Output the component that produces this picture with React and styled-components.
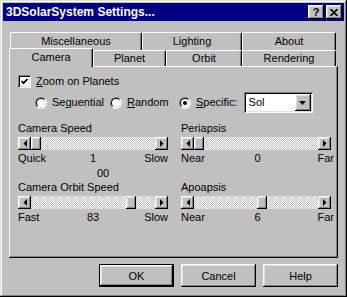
import React from 'react';
import styled, { createGlobalStyle, css } from 'styled-components';

const GlobalStyle = createGlobalStyle`
  html, body {
    margin: 0;
    padding: 0;
    background: #c0c0c0;
  }
  body {
    font-family: "Liberation Sans", Arial, sans-serif;
    font-size: 11px;
    color: #000;
  }
`;

const raised = css`
  box-shadow: inset -1px -1px #000, inset 1px 1px #fff, inset -2px -2px #808080, inset 2px 2px #dfdfdf;
`;

const sunken = css`
  box-shadow: inset 1px 1px #808080, inset -1px -1px #fff, inset 2px 2px #000, inset -2px -2px #dfdfdf;
`;

const Window = styled.div`
  width: 347px;
  height: 297px;
  box-sizing: border-box;
  padding: 3px;
  background: #c0c0c0;
  box-shadow: inset -1px -1px #000, inset 1px 1px #dfdfdf, inset -2px -2px #808080, inset 2px 2px #fff;
  display: flex;
  flex-direction: column;
`;

const TitleBar = styled.div`
  height: 18px;
  flex-shrink: 0;
  background: #000080;
  color: #fff;
  display: flex;
  align-items: center;
  justify-content: space-between;
  padding: 0 2px 0 3px;
  font-weight: bold;
  font-size: 12px;
`;

const TitleButtons = styled.div`
  display: flex;
  gap: 2px;
`;

const TitleButton = styled.div`
  width: 16px;
  height: 14px;
  box-sizing: border-box;
  background: #c0c0c0;
  ${raised};
  color: #000;
  font-size: 11px;
  font-weight: bold;
  display: flex;
  align-items: center;
  justify-content: center;
  line-height: 1;
`;

const Body = styled.div`
  flex: 1;
  padding: 11px 6px 0;
  display: flex;
  flex-direction: column;
`;

const TabRow = styled.div`
  display: flex;
  margin-left: ${p => p.$indent || 0}px;
`;

const Tab = styled.div`
  width: ${p => p.$w}px;
  height: ${p => p.$h}px;
  box-sizing: border-box;
  background: #c0c0c0;
  border: 1px solid #fff;
  border-bottom: none;
  border-right-color: #000;
  border-radius: 2px 2px 0 0;
  box-shadow: inset -1px 0 #808080;
  display: flex;
  justify-content: center;
  padding-top: ${p => p.$pt}px;
  line-height: 13px;
  ${p => p.$selected && css`
    position: relative;
    z-index: 1;
    margin-top: -2px;
    margin-bottom: -1px;
  `}
`;

const Panel = styled.div`
  height: 192px;
  box-sizing: border-box;
  padding: 9px 9px 0;
  box-shadow: inset -1px -1px #000, inset 1px 1px #fff, inset -2px -2px #808080;
  display: flex;
  flex-direction: column;
`;

const CheckRow = styled.label`
  display: flex;
  align-items: center;
  gap: 5px;
  height: 13px;
  line-height: 13px;
`;

const CheckBox = styled.span`
  width: 13px;
  height: 13px;
  box-sizing: border-box;
  background: #fff;
  ${sunken};
  display: flex;
  align-items: center;
  justify-content: center;
`;

const RadioRow = styled.div`
  display: flex;
  align-items: center;
  height: 21px;
  margin-top: 4px;
  padding-left: 17px;
`;

const RadioOption = styled.label`
  display: flex;
  align-items: center;
  gap: 5px;
  width: ${p => (p.$w ? `${p.$w}px` : 'auto')};
  line-height: 13px;
`;

const RadioOuter = styled.span`
  width: 12px;
  height: 12px;
  box-sizing: border-box;
  border-radius: 50%;
  border: 1px solid;
  border-color: #808080 #fff #fff #808080;
  display: flex;
`;

const RadioInner = styled.span`
  flex: 1;
  border-radius: 50%;
  border: 1px solid;
  border-color: #000 #dfdfdf #dfdfdf #000;
  background: #fff;
  display: flex;
  align-items: center;
  justify-content: center;
`;

const RadioDot = styled.span`
  width: 4px;
  height: 4px;
  border-radius: 50%;
  background: #000;
`;

const Key = styled.span`
  text-decoration: underline;
`;

const Combo = styled.div`
  width: 69px;
  height: 21px;
  box-sizing: border-box;
  margin-left: 6px;
  padding: 2px;
  background: #fff;
  ${sunken};
  display: flex;
  align-items: center;
`;

const ComboText = styled.span`
  flex: 1;
  padding-left: 3px;
  line-height: 13px;
`;

const ComboButton = styled.span`
  width: 16px;
  height: 17px;
  box-sizing: border-box;
  background: #c0c0c0;
  ${raised};
  display: flex;
  align-items: center;
  justify-content: center;
`;

const SliderGrid = styled.div`
  display: grid;
  grid-template-columns: 150px 150px;
  column-gap: 13px;
  row-gap: 1px;
  margin-top: 9px;
`;

const SliderGroup = styled.div`
  display: flex;
  flex-direction: column;
  line-height: 13px;
`;

const SliderLabel = styled.div`
  margin-bottom: 2px;
`;

const Scroll = styled.div`
  display: flex;
  height: 13px;
  margin-bottom: 2px;
`;

const ArrowButton = styled.span`
  width: 13px;
  height: 13px;
  box-sizing: border-box;
  background: #c0c0c0;
  ${raised};
  display: flex;
  align-items: center;
  justify-content: center;
`;

const Track = styled.div`
  flex: 1;
  display: flex;
  background-color: #fff;
  background-image: conic-gradient(#fff 0 25%, #c0c0c0 0 50%, #fff 0 75%, #c0c0c0 0);
  background-size: 2px 2px;
`;

const Thumb = styled.span`
  width: 10px;
  flex-shrink: 0;
  box-sizing: border-box;
  background: #c0c0c0;
  ${raised};
`;

const Ticks = styled.div`
  display: grid;
  grid-template-columns: 1fr auto 1fr;
  margin-right: ${p => (p.$overhang ? -3 : 0)}px;

  span:last-child {
    text-align: right;
  }
`;

const ExtraValue = styled.div`
  margin-top: 2px;
  padding-left: 79px;
`;

const ButtonRow = styled.div`
  display: flex;
  justify-content: flex-end;
  gap: 7px;
  margin-top: 6px;
`;

const Button = styled.button`
  width: 75px;
  height: 23px;
  box-sizing: border-box;
  padding: 0;
  font: inherit;
  color: #000;
  background: #c0c0c0;
  border: ${p => (p.$default ? '1px solid #000' : 'none')};
  ${raised};
`;

const Arrow = ({ dir }) => (
  <svg width="4" height="7" viewBox="0 0 4 7">
    {dir === 'left'
      ? <polygon points="4,0 4,7 0.5,3.5" fill="#000" />
      : <polygon points="0,0 0,7 3.5,3.5" fill="#000" />}
  </svg>
);

const Slider = ({ label, pos, left, value, right, extra, overhang }) => (
  <SliderGroup>
    <SliderLabel>{label}</SliderLabel>
    <Scroll>
      <ArrowButton><Arrow dir="left" /></ArrowButton>
      <Track>
        <span style={{ flexGrow: pos }} />
        <Thumb />
        <span style={{ flexGrow: 1 - pos }} />
      </Track>
      <ArrowButton><Arrow dir="right" /></ArrowButton>
    </Scroll>
    <Ticks $overhang={overhang}>
      <span>{left}</span>
      <span>{value}</span>
      <span>{right}</span>
    </Ticks>
    {extra && <ExtraValue>{extra}</ExtraValue>}
  </SliderGroup>
);

const backTabs = [
  { name: 'Miscellaneous', w: 132 },
  { name: 'Lighting', w: 100 },
  { name: 'About', w: 94 },
];

const frontTabs = [
  { name: 'Camera', w: 84, selected: true },
  { name: 'Planet', w: 73 },
  { name: 'Orbit', w: 76 },
  { name: 'Rendering', w: 94 },
];

const App = () => (
  <>
    <GlobalStyle />
    <Window>
      <TitleBar>
        <span>3DSolarSystem Settings...</span>
        <TitleButtons>
          <TitleButton>?</TitleButton>
          <TitleButton>
            <svg width="8" height="7" viewBox="0 0 8 7">
              <path d="M0.5 0 L7.5 7 M7.5 0 L0.5 7" stroke="#000" strokeWidth="1.6" />
            </svg>
          </TitleButton>
        </TitleButtons>
      </TitleBar>
      <Body>
        <TabRow $indent={1}>
          {backTabs.map(t => (
            <Tab key={t.name} $w={t.w} $h={18} $pt={2}>{t.name}</Tab>
          ))}
        </TabRow>
        <TabRow>
          {frontTabs.map(t => (
            <Tab
              key={t.name}
              $w={t.w}
              $h={t.selected ? 19 : 16}
              $pt={t.selected ? 2 : 1}
              $selected={t.selected}
            >
              {t.name}
            </Tab>
          ))}
        </TabRow>
        <Panel>
          <CheckRow>
            <CheckBox>
              <svg width="7" height="7" viewBox="0 0 7 7">
                <polyline points="0.5,3 2.5,5.2 6.5,1" fill="none" stroke="#000" strokeWidth="1.8" />
              </svg>
            </CheckBox>
            <span><Key>Z</Key>oom on Planets</span>
          </CheckRow>
          <RadioRow>
            <RadioOption $w={75}>
              <RadioOuter><RadioInner /></RadioOuter>
              <span>Se<Key>q</Key>uential</span>
            </RadioOption>
            <RadioOption $w={69}>
              <RadioOuter><RadioInner /></RadioOuter>
              <span><Key>R</Key>andom</span>
            </RadioOption>
            <RadioOption>
              <RadioOuter><RadioInner><RadioDot /></RadioInner></RadioOuter>
              <span><Key>S</Key>pecific:</span>
            </RadioOption>
            <Combo>
              <ComboText>Sol</ComboText>
              <ComboButton>
                <svg width="7" height="4" viewBox="0 0 7 4">
                  <polygon points="0,0 7,0 3.5,4" fill="#000" />
                </svg>
              </ComboButton>
            </Combo>
          </RadioRow>
          <SliderGrid>
            <Slider label="Camera Speed" pos={0} left="Quick" value="1" right="Slow" extra="00" />
            <Slider label="Periapsis" pos={0} left="Near" value="0" right="Far" overhang />
            <Slider label="Camera Orbit Speed" pos={0.83} left="Fast" value="83" right="Slow" />
            <Slider label="Apoapsis" pos={0.553} left="Near" value="6" right="Far" overhang />
          </SliderGrid>
        </Panel>
        <ButtonRow>
          <Button $default>OK</Button>
          <Button>Cancel</Button>
          <Button>Help</Button>
        </ButtonRow>
      </Body>
    </Window>
  </>
);

export default App;
